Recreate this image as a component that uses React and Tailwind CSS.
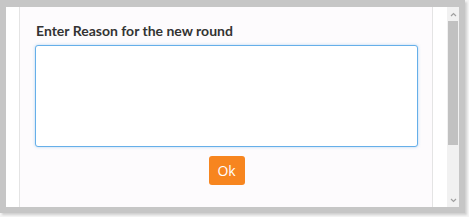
export default function App() {
  return (
    <div className="w-[469px] h-[217px] bg-[#f4f4f4] font-['Open_Sans',sans-serif]">
      <div className="w-[465px] h-[213px] border-t-[7px] border-l-[6px] border-r-[6px] border-b-[6px] border-[#c6c6c6] bg-white flex shadow-[2px_2px_2px_rgba(0,0,0,0.15)]">
        <div className="w-[14px] bg-white border-r border-[#e4e4e4]" />
        <div className="flex-1 bg-[#fdfbfd] border-r border-[#e4e4e4] pt-[15px] pl-[15px] pr-[14px] flex flex-col">
          <label className="font-['Lato',sans-serif] text-[14px] font-bold text-[#333] leading-[18px] pl-[1px]">
            Enter Reason for the new round
          </label>
          <textarea className="mt-[5px] h-[102px] w-full bg-white border border-[#66afe9] rounded-[3px] shadow-[0_0_3px_rgba(102,175,233,0.5)] resize-none outline-none" />
          <div className="flex justify-center mt-[9px]">
            <button className="w-[36px] h-[29px] bg-[#f7851f] text-white text-[14px] rounded-[3px] leading-none">
              Ok
            </button>
          </div>
        </div>
        <div className="w-[14px] bg-white" />
        <div className="w-[12px] bg-[#f1f1f1] flex flex-col items-center">
          <div className="h-[14px] flex items-center justify-center text-[#a0a0a0]">
            <svg width="7" height="5" viewBox="0 0 7 5"><path d="M1 4 L3.5 1.5 L6 4" stroke="currentColor" strokeWidth="1.2" fill="none" /></svg>
          </div>
          <div className="w-[10px] h-[124px] bg-[#c1c1c1]" />
          <div className="flex-1" />
          <div className="h-[14px] flex items-center justify-center text-[#a0a0a0]">
            <svg width="7" height="5" viewBox="0 0 7 5"><path d="M1 1 L3.5 3.5 L6 1" stroke="currentColor" strokeWidth="1.2" fill="none" /></svg>
          </div>
        </div>
      </div>
    </div>
  );
}
